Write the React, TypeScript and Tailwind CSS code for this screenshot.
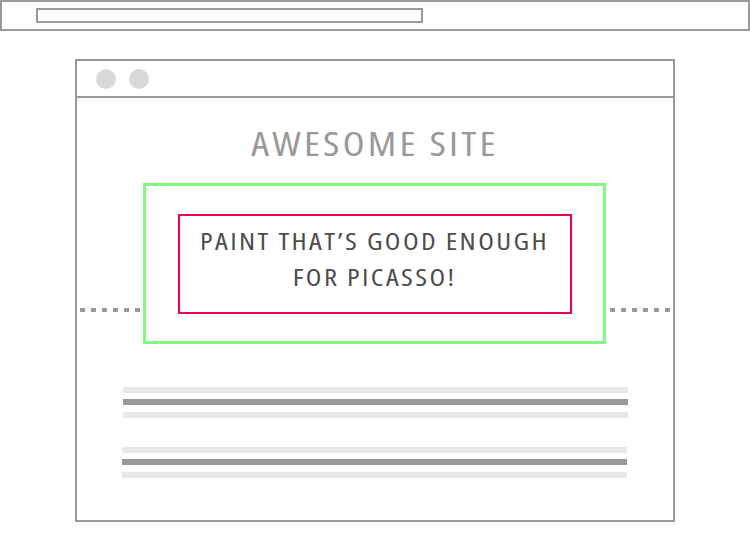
import React from "react";

const Dashes = () => (
  <div className="flex gap-[6px]">
    {[0, 1, 2, 3, 4, 5].map((i) => (
      <div key={i} className="w-[5px] h-[4px] bg-[#999999]" />
    ))}
  </div>
);

export default function App() {
  return (
    <div className="w-[750px] h-[550px] bg-white overflow-hidden" style={{ fontFamily: '"Open Sans", "DejaVu Sans", sans-serif' }}>
      <div className="h-[31px] w-full border-2 border-[#999999]">
        <div className="ml-[34px] mt-[6px] w-[387px] h-[15px] border-2 border-[#999999]" />
      </div>
      <div className="ml-[75px] mt-[28px] w-[600px] h-[463px] border-2 border-[#999999] flex flex-col">
        <div className="h-[37px] border-b-2 border-[#999999] flex items-center gap-[13px] pl-[19px]">
          <div className="w-[20px] h-[20px] rounded-full bg-[#d9d9d9]" />
          <div className="w-[20px] h-[20px] rounded-full bg-[#d9d9d9]" />
        </div>
        <div className="h-[85px] flex items-center justify-center pt-[7px]">
          <div className="text-[32px] leading-none text-[#999999] font-stretch-condensed tracking-[2.6px] font-medium scale-x-[1.25]">
            AWESOME SITE
          </div>
        </div>
        <div className="flex">
          <div className="w-[66px] flex justify-center pt-[125px]">
            <Dashes />
          </div>
          <div className="w-[463px] h-[161px] border-[3px] border-[#80fb80] flex items-center justify-center">
            <div className="w-[394px] h-[100px] border-2 border-[#f5004f] flex flex-col items-center justify-center pb-[9px]">
              <div className="text-[#4d4d4d] text-[23px] leading-[36px] font-stretch-condensed font-medium tracking-[1.9px] scale-x-[1.25] text-center">
                <div>PAINT THAT’S GOOD ENOUGH</div>
                <div>FOR PICASSO!</div>
              </div>
            </div>
          </div>
          <div className="w-[67px] flex justify-center pt-[125px]">
            <Dashes />
          </div>
        </div>
        <div className="mt-[43px] ml-[46px] w-[505px] flex flex-col">
          <div className="h-[6px] bg-[#e8e8e8]" />
          <div className="h-[6px] mt-[6px] bg-[#999999]" />
          <div className="h-[6px] mt-[7px] bg-[#e8e8e8]" />
        </div>
        <div className="mt-[29px] ml-[45px] w-[505px] flex flex-col">
          <div className="h-[6px] bg-[#e8e8e8]" />
          <div className="h-[6px] mt-[6px] bg-[#999999]" />
          <div className="h-[6px] mt-[7px] bg-[#e8e8e8]" />
        </div>
      </div>
    </div>
  );
}
